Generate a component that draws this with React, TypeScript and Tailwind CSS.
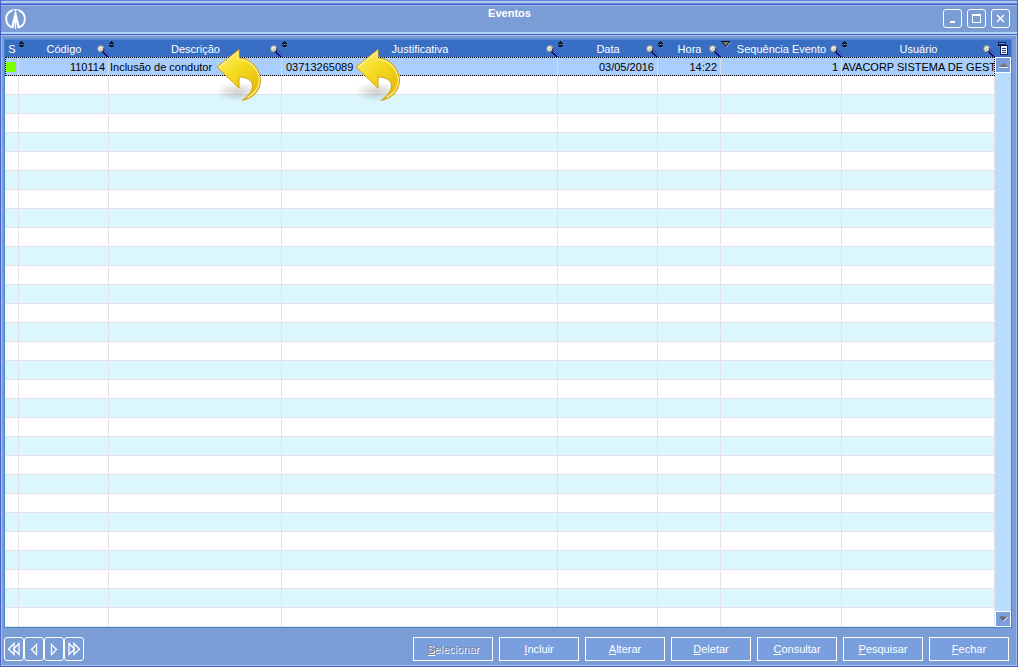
import React from "react";

type Column = {
  label: string;
  width: string;
  sort?: "both" | "down";
  search?: boolean;
  value: string;
  align: string;
};

const columns: Column[] = [
  { label: "S", width: "w-[14px]", value: "", align: "pl-px text-left" },
  { label: "Código", width: "w-[90px]", sort: "both", search: true, value: "110114", align: "pr-[3px] text-right" },
  { label: "Descrição", width: "w-[173px]", sort: "both", search: true, value: "Inclusão de condutor", align: "pl-px text-left" },
  { label: "Justificativa", width: "w-[276px]", sort: "both", search: true, value: "03713265089", align: "pl-1 text-left" },
  { label: "Data", width: "w-[100px]", sort: "both", search: true, value: "03/05/2016", align: "pr-[3px] text-right" },
  { label: "Hora", width: "w-[63px]", sort: "both", search: true, value: "14:22", align: "pr-[3px] text-right" },
  { label: "Sequência Evento", width: "w-[121px]", sort: "down", search: true, value: "1", align: "pr-[3px] text-right" },
  { label: "Usuário", width: "", sort: "both", search: true, value: "AVACORP SISTEMA DE GEST", align: "text-left" },
];

const emptyRows = Array.from({ length: 29 }, (_, i) => i);

const actions = ["Selecionar", "Incluir", "Alterar", "Deletar", "Consultar", "Pesquisar", "Fechar"];

function Logo() {
  return (
    <svg width="22" height="22" viewBox="0 0 22 22" fill="none" stroke="white" aria-hidden="true">
      <path d="M7.500 19.500A9 9 0 0 1 7 2.500M13.500 19.500A9 9 0 0 0 14 2.500" strokeWidth="1.900" />
      <path d="M6.500 2.600Q10.500 0.400 14.500 2.600" strokeWidth="1.100" />
      <path d="M10.500 1L6 20H8.500L10.500 11.500L12.500 20H15Z" fill="white" stroke="none" />
      <path d="M10.500 12V21" strokeWidth="1.200" />
    </svg>
  );
}

function SortIcon({ down }: { down?: boolean }) {
  return down ? (
    <svg width="10" height="7" viewBox="0 0 10 7" aria-hidden="true">
      <path d="M0.500 0.500H9L4.800 5.500Z" fill="#777" stroke="#111" />
      <path d="M5 6.300L9.700 1" stroke="#c6d7f5" strokeWidth="0.700" />
    </svg>
  ) : (
    <svg width="5" height="6" viewBox="0 0 5 6" shapeRendering="crispEdges" aria-hidden="true">
      <path d="M2 0H3V1H4V2H5V3H0V2H1V1H2ZM0 4H5V5H4V6H1V5H0Z" fill="#101218" />
    </svg>
  );
}

function SearchIcon() {
  return (
    <svg width="12" height="12" viewBox="0 0 12 12" aria-hidden="true">
      <path d="M6 6L11.500 11.500" stroke="#04042c" strokeWidth="2.600" />
      <path d="M6.800 6.300L11.800 11.300" stroke="#1424ee" strokeWidth="1.500" />
      <path d="M7 6L11.800 10.800" stroke="#dfe6fa" strokeWidth="0.500" />
      <circle cx="3.800" cy="3.800" r="3.200" fill="#d4d4cf" stroke="#8b8b8f" strokeWidth="0.800" />
      <path d="M2 4.300Q2 2 4.500 2" stroke="white" fill="none" />
      <path d="M7 3Q7.300 6.300 4.300 7.100" stroke="#222" fill="none" strokeWidth="0.900" />
    </svg>
  );
}

function CurvedArrow({ id }: { id: string }) {
  return (
    <svg width="50" height="56" viewBox="0 0 50 56" aria-hidden="true">
      <defs>
        <linearGradient id={id} x1="0" y1="0" x2="0.800" y2="1">
          <stop offset="0" stopColor="#fff27a" />
          <stop offset="0.450" stopColor="#f5dc22" />
          <stop offset="1" stopColor="#e2b80c" />
        </linearGradient>
        <radialGradient id={id + "-shade"}>
          <stop offset="0" stopColor="#777" stopOpacity="0.350" />
          <stop offset="1" stopColor="#777" stopOpacity="0" />
        </radialGradient>
      </defs>
      <ellipse cx="24" cy="44" rx="23" ry="10" fill={"url(#" + id + "-shade)"} />
      <path d="M3 19L25 1.500V10C37 10.500 46 20 46.500 33C46 43 39 50 28 52.500C36 47 40 40 38 35C36 31 31 29 25 29V40Z" fill={"url(#" + id + ")"} stroke="#cfa212" strokeLinejoin="round" />
      <path d="M5 19L24 3.800V11.200C36 11.500 44.500 21 45.300 32C45 41 39 47 33.500 49.500" fill="none" stroke="#fff39a" strokeWidth="1.100" />
    </svg>
  );
}

function ColumnsIcon() {
  return (
    <svg width="11" height="13" viewBox="0 0 11 13" shapeRendering="crispEdges" aria-hidden="true">
      <path d="M0 0H8V4H0Z" fill="#101a50" />
      <path d="M1 1H7V2H1Z" fill="#6ba0f0" />
      <path d="M2 3H10V13H2Z" fill="#101a50" />
      <path d="M3 4H9V12H3Z" fill="#eef4ff" />
      <path d="M4 6H8V7H4ZM4 8H8V9H4ZM4 10H8V11H4Z" fill="#26408f" />
    </svg>
  );
}

function WindowButton({ label, children }: { label: string; children: React.ReactNode }) {
  return (
    <button type="button" aria-label={label} className="flex h-[19px] w-[19px] items-center justify-center rounded-[3px] border border-white">
      <svg width="17" height="17" viewBox="0 0 17 17" fill="none" stroke="white" shapeRendering="crispEdges">{children}</svg>
    </button>
  );
}

function NavButton({ label, d }: { label: string; d: string }) {
  return (
    <button type="button" aria-label={label} className="flex h-6 w-5 items-center justify-center rounded-[3px] border border-white">
      <svg width="14" height="14" viewBox="0 0 14 14" fill="none" stroke="white" strokeWidth="1.300" className="shrink-0">
        <path d={d} />
      </svg>
    </button>
  );
}

function ScrollButton({ label, children }: { label: string; children: React.ReactNode }) {
  return (
    <button type="button" aria-label={label} className="flex h-4 w-full items-center justify-center border border-white bg-[#7a9ede]">
      <svg width="9" height="6" viewBox="0 0 9 6">{children}</svg>
    </button>
  );
}

export default function App() {
  return (
    <div className="flex min-h-screen flex-col border-x border-b border-[#4862cc] bg-[#7b9dd6] font-['Liberation_Sans',Arial,sans-serif] text-[11px] leading-[14px]">
      <div className="h-1 border-t border-b border-t-[#6483d8] border-b-[#6c8ad8] bg-[#a9cbf5]" />
      <header className="grid h-[31px] grid-cols-[1fr_auto_1fr] border-t border-b border-[#465ccb] pr-[7px] pl-1 shadow-[inset_0_1px_#9db9ea,inset_0_-2px_#acd5f6]">
        <div className="pt-[3px]"><Logo /></div>
        <h1 className="pt-px pl-1 font-bold text-white">Eventos</h1>
        <div className="flex justify-end gap-[5px] pt-1">
          <WindowButton label="Minimizar"><path d="M6 11.500H11M6 12.500H11" /></WindowButton>
          <WindowButton label="Maximizar"><path d="M4.500 4.500H12.500V12.500H4.500ZM4 5.500H13" /></WindowButton>
          <WindowButton label="Fechar janela"><path d="M5 5L12 12M12 5L5 12" strokeWidth="1.500" shapeRendering="auto" /></WindowButton>
        </div>
      </header>
      <div className="flex flex-1 flex-col border-x border-b border-[#a5c0ee]">
        <div className="h-1 border-t border-b border-t-[#a5c0ee] border-b-[#6c8ed4] bg-[#7b9dd6]" />
        <main className="mr-1 ml-[2px] flex border border-[#4787cb] bg-white">
          <div className="min-w-0 flex-1">
            <table className="w-full table-fixed border-separate border-spacing-0">
              <thead>
                <tr className="h-[17px] bg-[#386fc5] text-white">
                  {columns.map((c) => (
                    <th key={c.label} className={"relative p-0 font-normal " + c.width}>
                      {c.sort && <span className="absolute top-px left-0"><SortIcon down={c.sort === "down"} /></span>}
                      <span className="whitespace-nowrap">{c.label}</span>
                      {c.search && <span className="absolute right-0 bottom-0"><SearchIcon /></span>}
                    </th>
                  ))}
                </tr>
              </thead>
              <tbody>
                <tr className="h-[19px] bg-[#a9ceff] outline-1 -outline-offset-1 outline-dotted outline-black">
                  {columns.map((c) => (
                    <td key={c.label} className={"border-r border-[#d8dced] pt-px whitespace-nowrap " + c.align}>
                      {c.label === "S" ? <span className="block h-[10px] w-[10px] bg-[#80ff00]" /> : c.value}
                    </td>
                  ))}
                </tr>
                {emptyRows.map((i) => (
                  <tr key={i} className="h-[19px] odd:bg-[#dcf6fe] even:bg-white">
                    {columns.map((c) => <td key={c.label} className="border-r border-b border-[#e5e1e6] p-0" />)}
                  </tr>
                ))}
              </tbody>
            </table>
          </div>
          <div className="flex w-4 flex-col bg-[#b9dcff]">
            <button type="button" aria-label="Colunas" className="flex h-[17px] items-center justify-center bg-[#386fc5]"><ColumnsIcon /></button>
            <ScrollButton label="Rolar para cima"><path d="M4.500 0.500L9 5H0Z" fill="#77777c" /><path d="M0 5.500H9" stroke="#dfe9fb" /></ScrollButton>
            <div className="flex-1" />
            <ScrollButton label="Rolar para baixo"><path d="M0 0.500H8.500L4 5Z" fill="#68686d" /><path d="M4.300 5.500L8.700 0.800" stroke="white" /></ScrollButton>
          </div>
        </main>
        <footer className="flex flex-1 items-start justify-between pt-[9px] pr-[7px] pl-[2px]">
          <nav className="flex" aria-label="Registros">
            <NavButton label="Primeiro" d="M7 1.500V12.500L1.500 7ZM12 1.500V12.500L6.500 7Z" />
            <NavButton label="Anterior" d="M9.500 2.500V12.500L4.500 7.500Z" />
            <NavButton label="Próximo" d="M4.500 2.500V12.500L9.500 7.500Z" />
            <NavButton label="Último" d="M2 1.500V12.500L7.500 7ZM7 1.500V12.500L12.500 7Z" />
          </nav>
          <div className="flex gap-[6px]">
            {actions.map((a, i) => (
              <button
                key={a}
                type="button"
                disabled={i === 0}
                className="h-6 w-20 border border-white bg-[#7a9fdf] text-white disabled:text-[#80838e] disabled:[text-shadow:1px_1px_white]"
              >
                <u>{a[0]}</u>{a.slice(1)}
              </button>
            ))}
          </div>
        </footer>
      </div>
      <div className="absolute top-[48px] left-[214px]"><CurvedArrow id="arrow-a" /></div>
      <div className="absolute top-[48px] left-[353px]"><CurvedArrow id="arrow-b" /></div>
    </div>
  );
}
